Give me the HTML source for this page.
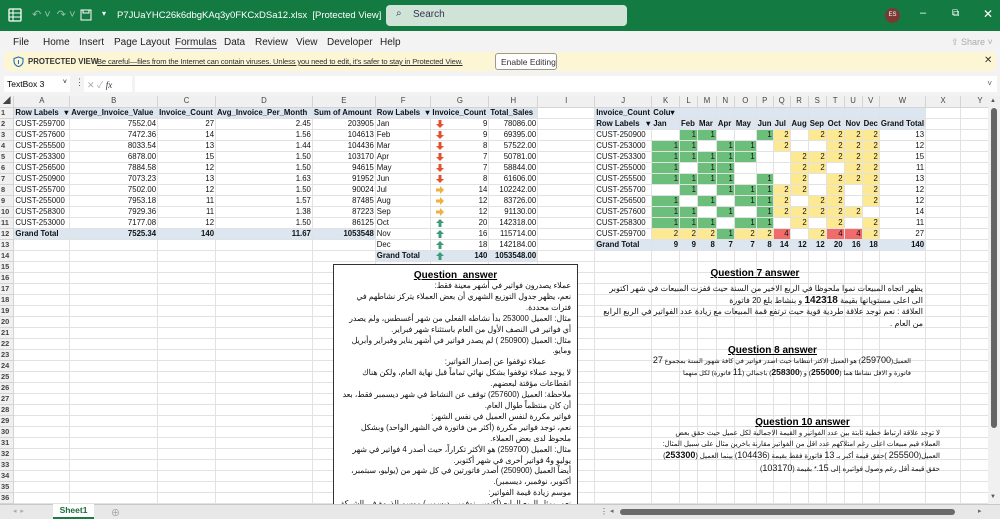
<!DOCTYPE html>
<html><head><meta charset="utf-8">
<style>
*{box-sizing:border-box;margin:0;padding:0}
body{width:1000px;height:519px;overflow:hidden;background:#f3f3f3;font-family:"Liberation Sans","Noto Sans CJK SC",sans-serif;position:relative}
.abs{position:absolute}
#title{left:0;top:0;width:1000px;height:31px;background:#137a42;color:#fff;font-size:10px}
#menu{top:31px;left:0;width:1000px;height:21px;font-size:10px;color:#222}
#menu span{position:absolute;top:6px}
#prot{left:4px;top:52px;width:992px;height:19px;background:#fcf6d4;border-radius:4px;font-size:8px;color:#333}
#fbar{left:0;top:75px;width:1000px;height:18px}
table{border-collapse:collapse;table-layout:fixed;position:absolute;left:0;top:96px;font-size:7.8px;color:#111}
td,th{height:11px;border-right:1px solid #e2e2e2;border-bottom:1px solid #e2e2e2;white-space:nowrap;overflow:hidden;padding:0 1px;line-height:10px;background:#fff}
th{background:#f0f0f0;color:#444;font-weight:normal;text-align:center;border-color:#d4d4d4}
th.rn{text-align:left;padding-left:1px;font-weight:bold;font-size:7.4px}
.b{font-weight:bold}
.r{text-align:right}
.hb{background:#dce6f1}
.gt td.hb{border-top:1px solid #9bb7d9}
.g{background:#6bbf7b;text-align:right}
.y{background:#fee993;text-align:right}
.rd{background:#f26b6b;text-align:right}
.ar{float:left;margin-left:4px;margin-top:1px}
.tb{font-family:"Liberation Sans","Noto Sans CJK SC",sans-serif;direction:rtl;text-align:right;color:#111}
.qt{position:absolute;font-weight:bold;font-size:10px;text-decoration:underline;direction:ltr;text-align:center}
</style></head><body>

<div id="title" class="abs">
  <svg class="abs" style="left:8px;top:8px" width="14" height="14"><rect x="1" y="1" width="12" height="12" rx="1" fill="none" stroke="#fff" stroke-width="1.3"/><path d="M1 5h12M1 9h12M5 1v12" stroke="#fff"/></svg>
  <span class="abs" style="left:32px;top:8px;opacity:.55;font-size:11px">↶ ˅ &nbsp;↷ ˅</span>
  <svg class="abs" style="left:80px;top:9px" width="12" height="12"><rect x="1" y="1" width="10" height="10" fill="none" stroke="#fff"/><rect x="3" y="1" width="6" height="3" fill="none" stroke="#fff"/></svg>
  <span class="abs" style="left:102px;top:9px;font-size:8px">▾</span>
  <span class="abs" style="left:117px;top:10px;font-size:9.5px">P7JUaYHC26k6dbgKAq3y0FKCxDSa12.xlsx &nbsp;[Protected View] &nbsp;- &nbsp;Excel</span>
  <div class="abs" style="left:386px;top:5px;width:241px;height:21px;background:#cfe4d6;border-radius:4px;color:#335;font-size:10px"><span class="abs" style="left:10px;top:3px">⌕</span><span class="abs" style="left:27px;top:4px">Search</span></div>
  <div class="abs" style="left:885px;top:8px;width:15px;height:15px;border-radius:50%;background:#7a3a33;font-size:6px;text-align:center;line-height:15px">ES</div>
  <span class="abs" style="left:920px;top:7px;font-size:11px">–</span>
  <span class="abs" style="left:952px;top:8px;font-size:10px">⧉</span>
  <span class="abs" style="left:983px;top:7px;font-size:12px">✕</span>
</div>

<div id="menu" class="abs">
  <span style="left:13px">File</span><span style="left:43px">Home</span><span style="left:79px">Insert</span><span style="left:114px">Page Layout</span><span style="left:175px;border-bottom:1.5px solid #666">Formulas</span><span style="left:224px">Data</span><span style="left:255px">Review</span><span style="left:296px">View</span><span style="left:327px">Developer</span><span style="left:380px">Help</span>
  <span style="left:951px;color:#aaa;font-size:9px">⇪ Share ˅</span>
</div>

<div id="prot" class="abs">
  <svg class="abs" style="left:9px;top:4px" width="11" height="11"><path d="M5.5 1L10 2.5v3C10 8 8 10 5.5 10.5 3 10 1 8 1 5.5v-3z" fill="none" stroke="#1f6fb5" stroke-width="1.1"/><path d="M5.5 4v4" stroke="#1f6fb5"/></svg>
  <span class="abs b" style="left:24px;top:5px;font-size:7.8px">PROTECTED VIEW</span>
  <span class="abs" style="left:93px;top:5px;text-decoration:underline;font-size:7.6px;letter-spacing:-0.15px">Be careful—files from the Internet can contain viruses. Unless you need to edit, it's safer to stay in Protected View.</span>
  <div class="abs" style="left:491px;top:1px;width:62px;height:17px;border:1px solid #999;border-radius:3px;background:#fff;font-size:8.5px;padding:3px 0 0 5px">Enable Editing</div>
  <span class="abs" style="left:980px;top:3px;font-size:10px">✕</span>
</div>

<div id="fbar" class="abs">
  <div class="abs" style="left:4px;top:1px;width:66px;height:16px;background:#fff;border-radius:2px;font-size:8.5px;padding:3px 3px">TextBox 3<span style="float:right;font-size:7px">˅</span></div>
  <span class="abs" style="left:75px;top:2px;font-size:9px;color:#555">⋮</span>
  <div class="abs" style="left:84px;top:1px;width:48px;height:16px;background:#fff;font-size:9px;color:#aaa;padding:2px 3px">✕ ✓ <i style="color:#333;font-family:'Liberation Serif',serif">fx</i></div>
  <div class="abs" style="left:135px;top:1px;width:862px;height:16px;background:#fff;font-size:8px;color:#555;text-align:right;padding:3px 5px">˅</div>
</div>

<table>
<colgroup><col style="width:14px"><col style="width:56px"><col style="width:88px"><col style="width:58px"><col style="width:97px"><col style="width:63px"><col style="width:56px"><col style="width:58px"><col style="width:49px"><col style="width:59px"><col style="width:57px"><col style="width:28px"><col style="width:18px"><col style="width:19px"><col style="width:18px"><col style="width:22px"><col style="width:17px"><col style="width:17px"><col style="width:18px"><col style="width:18px"><col style="width:18px"><col style="width:18px"><col style="width:17px"><col style="width:29px"><col style="width:36px"><col style="width:40px"></colgroup>
<tr><th>◢</th><th>A</th><th>B</th><th>C</th><th>D</th><th>E</th><th>F</th><th>G</th><th>H</th><th>I</th><th>J</th><th>K</th><th>L</th><th>M</th><th>N</th><th>O</th><th>P</th><th>Q</th><th>R</th><th>S</th><th>T</th><th>U</th><th>V</th><th>W</th><th>X</th><th>Y</th></tr>
<tr><th class="rn">1</th><td class="hb b">Row Labels <span style="float:right">▾</span></td><td class="hb b">Averge_Invoice_Value</td><td class="hb b">Invoice_Count</td><td class="hb b">Avg_Invoice_Per_Month</td><td class="hb b">Sum of Amount</td><td class="hb b">Row Labels <span style="float:right">▾</span></td><td class="hb b">Invoice_Count</td><td class="hb b">Total_Sales</td><td></td><td class="hb b">Invoice_Count</td><td class="hb b">Colu▾</td><td class="hb"></td><td class="hb"></td><td class="hb"></td><td class="hb"></td><td class="hb"></td><td class="hb"></td><td class="hb"></td><td class="hb"></td><td class="hb"></td><td class="hb"></td><td class="hb"></td><td class="hb"></td><td></td><td></td></tr>
<tr><th class="rn">2</th><td>CUST-259700</td><td class="r">7552.04</td><td class="r">27</td><td class="r">2.45</td><td class="r">203905</td><td>Jan</td><td class="r"><svg class="ar" width="8" height="8"><path d="M2.5 0h3v4h2.5L4 8 0 4h2.5z" fill="#e1502f"/></svg>9</td><td class="r">78086.00</td><td></td><td class="hb b">Row Labels <span style="float:right">▾</span></td><td class="hb b">Jan</td><td class="hb b">Feb</td><td class="hb b">Mar</td><td class="hb b">Apr</td><td class="hb b">May</td><td class="hb b">Jun</td><td class="hb b">Jul</td><td class="hb b">Aug</td><td class="hb b">Sep</td><td class="hb b">Oct</td><td class="hb b">Nov</td><td class="hb b">Dec</td><td class="hb b" style="overflow:visible">Grand Total</td><td></td><td></td></tr>
<tr><th class="rn">3</th><td>CUST-257600</td><td class="r">7472.36</td><td class="r">14</td><td class="r">1.56</td><td class="r">104613</td><td>Feb</td><td class="r"><svg class="ar" width="8" height="8"><path d="M2.5 0h3v4h2.5L4 8 0 4h2.5z" fill="#e1502f"/></svg>9</td><td class="r">69395.00</td><td></td><td>CUST-250900</td><td></td><td class="g">1</td><td class="g">1</td><td></td><td></td><td class="g">1</td><td class="y">2</td><td></td><td class="y">2</td><td class="y">2</td><td class="y">2</td><td class="y">2</td><td class="r">13</td><td></td><td></td></tr>
<tr><th class="rn">4</th><td>CUST-255500</td><td class="r">8033.54</td><td class="r">13</td><td class="r">1.44</td><td class="r">104436</td><td>Mar</td><td class="r"><svg class="ar" width="8" height="8"><path d="M2.5 0h3v4h2.5L4 8 0 4h2.5z" fill="#e1502f"/></svg>8</td><td class="r">57522.00</td><td></td><td>CUST-253000</td><td class="g">1</td><td class="g">1</td><td></td><td class="g">1</td><td class="g">1</td><td></td><td class="y">2</td><td></td><td></td><td class="y">2</td><td class="y">2</td><td class="y">2</td><td class="r">12</td><td></td><td></td></tr>
<tr><th class="rn">5</th><td>CUST-253300</td><td class="r">6878.00</td><td class="r">15</td><td class="r">1.50</td><td class="r">103170</td><td>Apr</td><td class="r"><svg class="ar" width="8" height="8"><path d="M2.5 0h3v4h2.5L4 8 0 4h2.5z" fill="#e1502f"/></svg>7</td><td class="r">50781.00</td><td></td><td>CUST-253300</td><td class="g">1</td><td class="g">1</td><td class="g">1</td><td class="g">1</td><td class="g">1</td><td></td><td></td><td class="y">2</td><td class="y">2</td><td class="y">2</td><td class="y">2</td><td class="y">2</td><td class="r">15</td><td></td><td></td></tr>
<tr><th class="rn">6</th><td>CUST-256500</td><td class="r">7884.58</td><td class="r">12</td><td class="r">1.50</td><td class="r">94615</td><td>May</td><td class="r"><svg class="ar" width="8" height="8"><path d="M2.5 0h3v4h2.5L4 8 0 4h2.5z" fill="#e1502f"/></svg>7</td><td class="r">58844.00</td><td></td><td>CUST-255000</td><td class="g">1</td><td></td><td class="g">1</td><td class="g">1</td><td></td><td></td><td></td><td class="y">2</td><td class="y">2</td><td></td><td class="y">2</td><td class="y">2</td><td class="r">11</td><td></td><td></td></tr>
<tr><th class="rn">7</th><td>CUST-250900</td><td class="r">7073.23</td><td class="r">13</td><td class="r">1.63</td><td class="r">91952</td><td>Jun</td><td class="r"><svg class="ar" width="8" height="8"><path d="M2.5 0h3v4h2.5L4 8 0 4h2.5z" fill="#e1502f"/></svg>8</td><td class="r">61606.00</td><td></td><td>CUST-255500</td><td class="g">1</td><td class="g">1</td><td class="g">1</td><td class="g">1</td><td></td><td class="g">1</td><td></td><td class="y">2</td><td></td><td class="y">2</td><td class="y">2</td><td class="y">2</td><td class="r">13</td><td></td><td></td></tr>
<tr><th class="rn">8</th><td>CUST-255700</td><td class="r">7502.00</td><td class="r">12</td><td class="r">1.50</td><td class="r">90024</td><td>Jul</td><td class="r"><svg class="ar" width="8" height="8"><path d="M0 2.5h4V0l4 4-4 4V5.5H0z" fill="#f0b03c"/></svg>14</td><td class="r">102242.00</td><td></td><td>CUST-255700</td><td></td><td class="g">1</td><td></td><td class="g">1</td><td class="g">1</td><td class="g">1</td><td class="y">2</td><td class="y">2</td><td></td><td class="y">2</td><td></td><td class="y">2</td><td class="r">12</td><td></td><td></td></tr>
<tr><th class="rn">9</th><td>CUST-255000</td><td class="r">7953.18</td><td class="r">11</td><td class="r">1.57</td><td class="r">87485</td><td>Aug</td><td class="r"><svg class="ar" width="8" height="8"><path d="M0 2.5h4V0l4 4-4 4V5.5H0z" fill="#f0b03c"/></svg>12</td><td class="r">83726.00</td><td></td><td>CUST-256500</td><td class="g">1</td><td></td><td class="g">1</td><td></td><td class="g">1</td><td class="g">1</td><td class="y">2</td><td></td><td class="y">2</td><td class="y">2</td><td></td><td class="y">2</td><td class="r">12</td><td></td><td></td></tr>
<tr><th class="rn">10</th><td>CUST-258300</td><td class="r">7929.36</td><td class="r">11</td><td class="r">1.38</td><td class="r">87223</td><td>Sep</td><td class="r"><svg class="ar" width="8" height="8"><path d="M0 2.5h4V0l4 4-4 4V5.5H0z" fill="#f0b03c"/></svg>12</td><td class="r">91130.00</td><td></td><td>CUST-257600</td><td class="g">1</td><td class="g">1</td><td></td><td class="g">1</td><td></td><td class="g">1</td><td class="y">2</td><td class="y">2</td><td class="y">2</td><td class="y">2</td><td class="y">2</td><td></td><td class="r">14</td><td></td><td></td></tr>
<tr><th class="rn">11</th><td>CUST-253000</td><td class="r">7177.08</td><td class="r">12</td><td class="r">1.50</td><td class="r">86125</td><td>Oct</td><td class="r"><svg class="ar" width="8" height="8"><path d="M2.5 8h3V4h2.5L4 0 0 4h2.5z" fill="#3e9c7a"/></svg>20</td><td class="r">142318.00</td><td></td><td>CUST-258300</td><td class="g">1</td><td class="g">1</td><td class="g">1</td><td></td><td class="g">1</td><td class="g">1</td><td></td><td class="y">2</td><td></td><td class="y">2</td><td></td><td class="y">2</td><td class="r">11</td><td></td><td></td></tr>
<tr class="gt"><th class="rn">12</th><td class="hb b">Grand Total</td><td class="hb b r">7525.34</td><td class="hb b r">140</td><td class="hb b r">11.67</td><td class="hb b r">1053548</td><td>Nov</td><td class="r"><svg class="ar" width="8" height="8"><path d="M2.5 8h3V4h2.5L4 0 0 4h2.5z" fill="#3e9c7a"/></svg>16</td><td class="r">115714.00</td><td></td><td>CUST-259700</td><td class="y">2</td><td class="y">2</td><td class="y">2</td><td class="g">1</td><td class="y">2</td><td class="y">2</td><td class="rd">4</td><td></td><td class="y">2</td><td class="rd">4</td><td class="rd">4</td><td class="y">2</td><td class="r">27</td><td></td><td></td></tr>
<tr class="gt"><th class="rn">13</th><td></td><td></td><td></td><td></td><td></td><td>Dec</td><td class="r"><svg class="ar" width="8" height="8"><path d="M2.5 8h3V4h2.5L4 0 0 4h2.5z" fill="#3e9c7a"/></svg>18</td><td class="r">142184.00</td><td></td><td class="hb b">Grand Total</td><td class="hb b r">9</td><td class="hb b r">9</td><td class="hb b r">8</td><td class="hb b r">7</td><td class="hb b r">7</td><td class="hb b r">8</td><td class="hb b r">14</td><td class="hb b r">12</td><td class="hb b r">12</td><td class="hb b r">20</td><td class="hb b r">16</td><td class="hb b r">18</td><td class="hb b r">140</td><td></td><td></td></tr>
<tr class="gt"><th class="rn">14</th><td></td><td></td><td></td><td></td><td></td><td class="hb b">Grand Total</td><td class="hb b r"><svg class="ar" width="8" height="8"><path d="M2.5 8h3V4h2.5L4 0 0 4h2.5z" fill="#3e9c7a"/></svg>140</td><td class="hb b r">1053548.00</td><td></td><td></td><td></td><td></td><td></td><td></td><td></td><td></td><td></td><td></td><td></td><td></td><td></td><td></td><td></td><td></td><td></td></tr>
<tr><th class="rn">15</th><td></td><td></td><td></td><td></td><td></td><td></td><td></td><td></td><td></td><td></td><td></td><td></td><td></td><td></td><td></td><td></td><td></td><td></td><td></td><td></td><td></td><td></td><td></td><td></td><td></td></tr>
<tr><th class="rn">16</th><td></td><td></td><td></td><td></td><td></td><td></td><td></td><td></td><td></td><td></td><td></td><td></td><td></td><td></td><td></td><td></td><td></td><td></td><td></td><td></td><td></td><td></td><td></td><td></td><td></td></tr>
<tr><th class="rn">17</th><td></td><td></td><td></td><td></td><td></td><td></td><td></td><td></td><td></td><td></td><td></td><td></td><td></td><td></td><td></td><td></td><td></td><td></td><td></td><td></td><td></td><td></td><td></td><td></td><td></td></tr>
<tr><th class="rn">18</th><td></td><td></td><td></td><td></td><td></td><td></td><td></td><td></td><td></td><td></td><td></td><td></td><td></td><td></td><td></td><td></td><td></td><td></td><td></td><td></td><td></td><td></td><td></td><td></td><td></td></tr>
<tr><th class="rn">19</th><td></td><td></td><td></td><td></td><td></td><td></td><td></td><td></td><td></td><td></td><td></td><td></td><td></td><td></td><td></td><td></td><td></td><td></td><td></td><td></td><td></td><td></td><td></td><td></td><td></td></tr>
<tr><th class="rn">20</th><td></td><td></td><td></td><td></td><td></td><td></td><td></td><td></td><td></td><td></td><td></td><td></td><td></td><td></td><td></td><td></td><td></td><td></td><td></td><td></td><td></td><td></td><td></td><td></td><td></td></tr>
<tr><th class="rn">21</th><td></td><td></td><td></td><td></td><td></td><td></td><td></td><td></td><td></td><td></td><td></td><td></td><td></td><td></td><td></td><td></td><td></td><td></td><td></td><td></td><td></td><td></td><td></td><td></td><td></td></tr>
<tr><th class="rn">22</th><td></td><td></td><td></td><td></td><td></td><td></td><td></td><td></td><td></td><td></td><td></td><td></td><td></td><td></td><td></td><td></td><td></td><td></td><td></td><td></td><td></td><td></td><td></td><td></td><td></td></tr>
<tr><th class="rn">23</th><td></td><td></td><td></td><td></td><td></td><td></td><td></td><td></td><td></td><td></td><td></td><td></td><td></td><td></td><td></td><td></td><td></td><td></td><td></td><td></td><td></td><td></td><td></td><td></td><td></td></tr>
<tr><th class="rn">24</th><td></td><td></td><td></td><td></td><td></td><td></td><td></td><td></td><td></td><td></td><td></td><td></td><td></td><td></td><td></td><td></td><td></td><td></td><td></td><td></td><td></td><td></td><td></td><td></td><td></td></tr>
<tr><th class="rn">25</th><td></td><td></td><td></td><td></td><td></td><td></td><td></td><td></td><td></td><td></td><td></td><td></td><td></td><td></td><td></td><td></td><td></td><td></td><td></td><td></td><td></td><td></td><td></td><td></td><td></td></tr>
<tr><th class="rn">26</th><td></td><td></td><td></td><td></td><td></td><td></td><td></td><td></td><td></td><td></td><td></td><td></td><td></td><td></td><td></td><td></td><td></td><td></td><td></td><td></td><td></td><td></td><td></td><td></td><td></td></tr>
<tr><th class="rn">27</th><td></td><td></td><td></td><td></td><td></td><td></td><td></td><td></td><td></td><td></td><td></td><td></td><td></td><td></td><td></td><td></td><td></td><td></td><td></td><td></td><td></td><td></td><td></td><td></td><td></td></tr>
<tr><th class="rn">28</th><td></td><td></td><td></td><td></td><td></td><td></td><td></td><td></td><td></td><td></td><td></td><td></td><td></td><td></td><td></td><td></td><td></td><td></td><td></td><td></td><td></td><td></td><td></td><td></td><td></td></tr>
<tr><th class="rn">29</th><td></td><td></td><td></td><td></td><td></td><td></td><td></td><td></td><td></td><td></td><td></td><td></td><td></td><td></td><td></td><td></td><td></td><td></td><td></td><td></td><td></td><td></td><td></td><td></td><td></td></tr>
<tr><th class="rn">30</th><td></td><td></td><td></td><td></td><td></td><td></td><td></td><td></td><td></td><td></td><td></td><td></td><td></td><td></td><td></td><td></td><td></td><td></td><td></td><td></td><td></td><td></td><td></td><td></td><td></td></tr>
<tr><th class="rn">31</th><td></td><td></td><td></td><td></td><td></td><td></td><td></td><td></td><td></td><td></td><td></td><td></td><td></td><td></td><td></td><td></td><td></td><td></td><td></td><td></td><td></td><td></td><td></td><td></td><td></td></tr>
<tr><th class="rn">32</th><td></td><td></td><td></td><td></td><td></td><td></td><td></td><td></td><td></td><td></td><td></td><td></td><td></td><td></td><td></td><td></td><td></td><td></td><td></td><td></td><td></td><td></td><td></td><td></td><td></td></tr>
<tr><th class="rn">33</th><td></td><td></td><td></td><td></td><td></td><td></td><td></td><td></td><td></td><td></td><td></td><td></td><td></td><td></td><td></td><td></td><td></td><td></td><td></td><td></td><td></td><td></td><td></td><td></td><td></td></tr>
<tr><th class="rn">34</th><td></td><td></td><td></td><td></td><td></td><td></td><td></td><td></td><td></td><td></td><td></td><td></td><td></td><td></td><td></td><td></td><td></td><td></td><td></td><td></td><td></td><td></td><td></td><td></td><td></td></tr>
<tr><th class="rn">35</th><td></td><td></td><td></td><td></td><td></td><td></td><td></td><td></td><td></td><td></td><td></td><td></td><td></td><td></td><td></td><td></td><td></td><td></td><td></td><td></td><td></td><td></td><td></td><td></td><td></td></tr>
<tr><th class="rn">36</th><td></td><td></td><td></td><td></td><td></td><td></td><td></td><td></td><td></td><td></td><td></td><td></td><td></td><td></td><td></td><td></td><td></td><td></td><td></td><td></td><td></td><td></td><td></td><td></td><td></td></tr>
</table>

<div class="abs" style="left:333px;top:264px;width:245px;height:242px;background:#fff;border:1px solid #333;overflow:hidden">
  <div style="text-align:center;font-weight:bold;font-size:10px;text-decoration:underline;margin-top:5px;line-height:11px">Question &nbsp;answer</div>
  <div class="tb" style="font-size:7.8px;line-height:10.9px;padding:0 6px 0 6px">
  عملاء يصدرون فواتير في أشهر معينة فقط:<br>
  نعم، يظهر جدول التوزيع الشهري أن بعض العملاء يتركز نشاطهم في فترات محددة.<br>
  مثال: العميل 253000 بدأ نشاطه الفعلي من شهر أغسطس، ولم يصدر أي فواتير في النصف الأول من العام باستثناء شهر فبراير.<br>
  مثال: العميل (250900 ) لم يصدر فواتير في أشهر يناير وفبراير وأبريل ومايو.<br>
  <div style="padding-right:25px">عملاء توقفوا عن إصدار الفواتير:</div>
  لا يوجد عملاء توقفوا بشكل نهائي تماماً قبل نهاية العام، ولكن هناك انقطاعات مؤقتة لبعضهم.<br>
  ملاحظة: العميل (257600) توقف عن النشاط في شهر ديسمبر فقط، بعد أن كان منتظماً طوال العام.<br>
  فواتير مكررة لنفس العميل في نفس الشهر:<br>
  نعم، توجد فواتير مكررة (أكثر من فاتورة في الشهر الواحد) وبشكل ملحوظ لدى بعض العملاء.<br>
  مثال: العميل (259700) هو الأكثر تكراراً، حيث أصدر 4 فواتير في شهر يوليو و4 فواتير أخرى في شهر أكتوبر.<br>
  أيضاً العميل (250900) أصدر فاتورتين في كل شهر من (يوليو، سبتمبر، أكتوبر، نوفمبر، ديسمبر).<br>
  موسم زيادة قيمة الفواتير:<br>
  نعم، يمثل الربع الرابع (أكتوبر، نوفمبر، ديسمبر) موسم الذروة في الشركة
  </div>
</div>

<div class="qt" style="left:690px;top:268px;width:130px">Question 7 answer</div>
<div class="abs tb" style="left:598px;top:283px;width:325px;font-size:8px;line-height:11.7px">
يظهر اتجاه المبيعات نموا ملحوظا في الربع الاخير من السنة حيث قفزت المبيعات في شهر اكتوبر الى اعلى مستوياتها بقيمة <b style="font-size:10px">142318</b> و بنشاط بلغ 20 فاتورة<br>
العلاقة : نعم توجد علاقة طردية قوية حيث ترتفع قمة المبيعات مع زيادة عدد الفواتير في الربع الرابع من العام .
</div>

<div class="qt" style="left:705px;top:345px;width:135px">Question 8 answer</div>
<div class="abs tb" style="left:636px;top:355px;width:275px;font-size:6.6px;line-height:11px">
العميل(<span style="font-size:9px">259700</span>) هو العميل الاكثر انتظاما حيث اصدر فواتير في كافة شهور السنة بمجموع <span style="font-size:9px">27</span> فاتورة و الاقل نشاطا هما (<b style="font-size:8.5px">255000</b>) و (<b style="font-size:8.5px">258300</b>) باجمالي (<span style="font-size:9px">11</span> فاتورة) لكل منهما
</div>

<div class="qt" style="left:730px;top:417px;width:145px">Question 10 answer</div>
<div class="abs tb" style="left:662px;top:428px;width:278px;font-size:7px;line-height:11.2px">
لا توجد علاقة ارتباط خطية ثابتة بين عدد الفواتير و القيمة الاجمالية لكل عميل حيث حقق بعض العملاء قيم مبيعات اعلى رغم امتلاكهم عدد اقل من الفواتير مقارنة باخرين مثال على سبيل المثال: العميل(<span style="font-size:9px">255500</span> )حقق قيمة أكبر بـ <span style="font-size:9px">13</span> فاتورة فقط بقيمة (<span style="font-size:9px">104436</span>) بينما العميل (<b style="font-size:9px">253300</b>) حقق قيمة أقل رغم وصول فواتيره إلى <span style="font-size:9px">15</span>.* بقيمة (<span style="font-size:9px">103170</span>)
</div>

<div class="abs" style="left:988px;top:96px;width:12px;height:409px;background:#f0f0f0">
  <span class="abs" style="left:2px;top:2px;font-size:6px;color:#555">▲</span>
  <div class="abs" style="left:3px;top:12px;width:6px;height:320px;border-radius:3px;background:#666"></div>
  <span class="abs" style="left:2px;top:398px;font-size:6px;color:#555">▼</span>
</div>

<div class="abs" style="left:0;top:504px;width:1000px;height:15px;background:#e8e8e8;border-top:1px solid #c8c8c8">
  <span class="abs" style="left:13px;top:2px;font-size:7px;color:#aaa">◂ &nbsp;▸</span>
  <div class="abs" style="left:53px;top:-1px;width:41px;height:15px;background:#fff;border-bottom:2px solid #1d7a45;color:#1d6b3c;font-weight:bold;font-size:8.5px;text-align:center;line-height:13px">Sheet1</div>
  <span class="abs" style="left:111px;top:1px;font-size:9px;color:#999">⊕</span>
  <span class="abs" style="left:600px;top:2px;font-size:8px;color:#555">⋮</span>
  <span class="abs" style="left:610px;top:2px;font-size:7px;color:#666">◂</span>
  <div class="abs" style="left:620px;top:4px;width:335px;height:6px;border-radius:3px;background:#6a6a6a"></div>
  <span class="abs" style="left:978px;top:2px;font-size:7px;color:#666">▸</span>
</div>
</body></html>
